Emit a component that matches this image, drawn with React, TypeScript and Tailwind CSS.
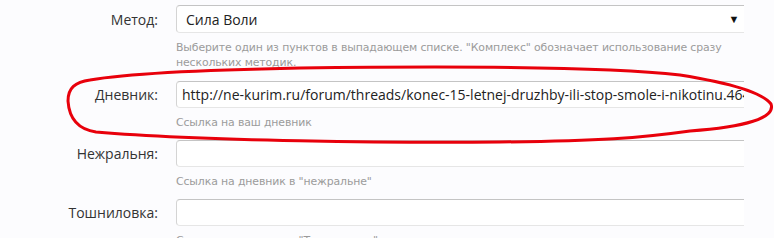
import React from "react";

const labelCls =
  "w-[176px] shrink-0 pr-[18px] h-[27px] flex items-center justify-end text-[14px] text-[#333] font-['Open_Sans',sans-serif]";
const boxCls =
  "w-[568px] h-[27px] bg-white border border-r-0 border-t-[#c4c4c4] border-l-[#d4d4d4] border-b-[#e6e6e6] rounded-l-[4px] flex items-center text-[14px] text-[#222] font-['Open_Sans',sans-serif] overflow-hidden whitespace-nowrap";
const hintCls =
  "mt-[7px] text-[10.9px] leading-[15px] tracking-[-0.12px] text-[#9b9b9b] font-['DejaVu_Sans',sans-serif] whitespace-nowrap";

function Row({
  label,
  children,
  hint,
  className = "",
  tall = false,
}: {
  label: string;
  children?: React.ReactNode;
  hint: React.ReactNode;
  className?: string;
  tall?: boolean;
}) {
  return (
    <div className={"flex items-start " + className}>
      <div className={labelCls + (tall ? " !h-[28px]" : "")}>{label}</div>
      <div className="flex flex-col">
        {children}
        <div className={hintCls}>{hint}</div>
      </div>
    </div>
  );
}

export default function App() {
  return (
    <div className="relative w-[774px] h-[238px] overflow-hidden bg-[#fcfcfe]">
      <div className="flex flex-col">
        <Row
          className="pt-[5px]"
          tall
          label="Метод:"
          hint={
            <>
              Выберите один из пунктов в выпадающем списке. "Комплекс" обозначает использование сразу
              <br />
              нескольких методик.
            </>
          }
        >
          <div className={boxCls + " !h-[28px] justify-between pl-[9px] pr-[3px]"}>
            <span>Сила Воли</span>
            <span className="text-[11px] text-[#111] w-[14px] text-center">▼</span>
          </div>
        </Row>
        <Row className="mt-[11px]" label="Дневник:" hint="Ссылка на ваш дневник">
          <div className={boxCls + " pl-[5px]"}>
            http://ne-kurim.ru/forum/threads/konec-15-letnej-druzhby-ili-stop-smole-i-nikotinu.4642/
          </div>
        </Row>
        <Row className="mt-[10px]" label="Нежральня:" hint={'Ссылка на дневник в "нежральне"'}>
          <div className={boxCls} />
        </Row>
        <Row className="mt-[10px]" label="Тошниловка:" hint={'Ссылка на дневник в "Тошниловке"'}>
          <div className={boxCls} />
        </Row>
      </div>
      <svg
        className="absolute left-0 top-0 pointer-events-none"
        width="774"
        height="238"
        viewBox="0 0 774 238"
      >
        <path
          d="M 90 80 C 130 73, 200 70, 300 68 C 450 66, 600 66, 680 75 C 730 83, 762 92, 771 104 C 776 118, 745 127, 690 131 C 640 138, 600 141, 500 142 C 400 143, 200 141, 96 132 C 76 129, 69 116, 68 101 C 68 88, 75 82, 90 80"
          fill="none"
          stroke="#e8000b"
          strokeWidth="3"
          strokeLinecap="round"
          strokeLinejoin="round"
        />
      </svg>
    </div>
  );
}
